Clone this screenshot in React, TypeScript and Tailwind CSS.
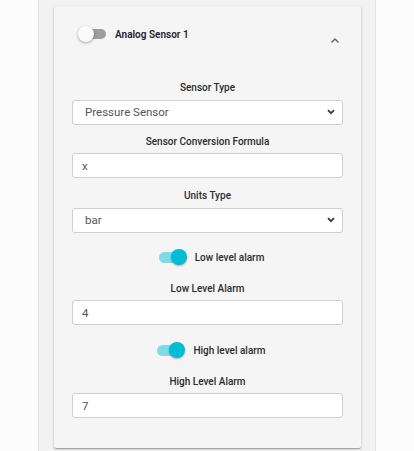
import React from "react";

function Toggle({ on }: { on: boolean }) {
  return (
    <span className="relative inline-flex h-[16px] w-[28px] shrink-0 items-center">
      <span
        className={
          on
            ? "absolute left-[0px] right-[2px] h-[11px] rounded-full bg-[#7fdbe8]"
            : "absolute left-[1px] right-[0px] h-[10px] rounded-full bg-[#9e9e9e]"
        }
      />
      <span
        className={
          on
            ? "absolute right-0 h-[16px] w-[16px] rounded-full bg-[#00bcd4] shadow-[0_1px_2px_rgba(0,0,0,0.3)]"
            : "absolute left-0 h-[16px] w-[16px] rounded-full bg-[#fafafa] shadow-[0_1px_3px_rgba(0,0,0,0.35)]"
        }
      />
    </span>
  );
}

function Label({ children }: { children: React.ReactNode }) {
  return (
    <div className="mb-[4px] h-[14px] text-center text-[10px] font-medium leading-[14px] text-[#2b2b2b]">
      {children}
    </div>
  );
}

function SelectBox({ value }: { value: string }) {
  return (
    <div className="relative h-[25px] w-full">
      <select
        defaultValue={value}
        className="h-full w-full appearance-none rounded-[3px] border border-[#cfcfcf] bg-white pl-[12px] text-[11.5px] text-[#555] outline-none"
      >
        <option>{value}</option>
      </select>
      <svg
        className="pointer-events-none absolute right-[8px] top-[10px]"
        width="8"
        height="6"
        viewBox="0 0 8 6"
      >
        <path d="M1 1.2 L4 4.2 L7 1.2" fill="none" stroke="#3a3a3a" strokeWidth="1.8" />
      </svg>
    </div>
  );
}

function TextBox({ value }: { value: string }) {
  return (
    <input
      defaultValue={value}
      className="h-[25px] w-full rounded-[3px] border border-[#cfcfcf] bg-white pl-[9px] text-[11.5px] text-[#555] outline-none"
    />
  );
}

function ToggleRow({ label }: { label: string }) {
  return (
    <div className="flex h-[16px] items-center justify-center gap-[8px] pl-[8px]">
      <Toggle on />
      <span className="text-[10px] font-medium text-[#2b2b2b]">{label}</span>
    </div>
  );
}

export default function App() {
  return (
    <div className="min-h-[451px] w-full bg-[#fcfcfc] font-['Roboto',sans-serif]">
      <div className="mx-auto min-h-[451px] w-[338px] border-x border-[#e4e4e4] bg-[#f2f2f2] px-[15px] pt-[6px]">
        <div className="w-[307px] rounded-[2px] bg-[#f5f5f5] shadow-[0_1px_3px_rgba(0,0,0,0.2),0_1px_1px_rgba(0,0,0,0.14),0_2px_1px_-1px_rgba(0,0,0,0.12)]">
          {/* panel header */}
          <div className="relative h-[75px] pl-[24px] pt-[20px]">
            <div className="flex h-[16px] items-center gap-[9px]">
              <Toggle on={false} />
              <span className="text-[10px] font-semibold text-[#1f2233]">Analog Sensor 1</span>
            </div>
            <svg
              className="absolute right-[21px] top-[31px]"
              width="10"
              height="7"
              viewBox="0 0 10 7"
            >
              <path d="M1.5 5.5 L5 2 L8.5 5.5" fill="none" stroke="#6b6b6b" strokeWidth="1.5" />
            </svg>
          </div>

          {/* panel body */}
          <div className="flex flex-col px-[18px] pb-[30px]">
            <Label>Sensor Type</Label>
            <SelectBox value="Pressure Sensor" />
            <div className="h-[11px]" />
            <Label>Sensor Conversion Formula</Label>
            <TextBox value="x" />
            <div className="h-[11px]" />
            <Label>Units Type</Label>
            <SelectBox value="bar" />
            <div className="h-[17px]" />
            <ToggleRow label="Low level alarm" />
            <div className="h-[17px]" />
            <Label>Low Level Alarm</Label>
            <TextBox value="4" />
            <div className="h-[17px]" />
            <ToggleRow label="High level alarm" />
            <div className="h-[17px]" />
            <Label>High Level Alarm</Label>
            <TextBox value="7" />
          </div>
        </div>
      </div>
    </div>
  );
}
